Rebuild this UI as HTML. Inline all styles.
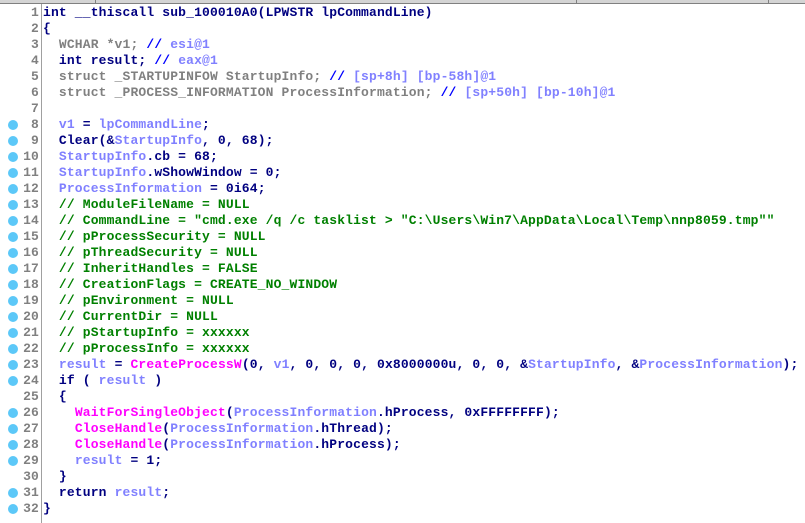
<!DOCTYPE html>
<html><head><style>
body{margin:0;width:805px;height:523px;overflow:hidden;background:#fff;position:relative;font-family:"Liberation Mono",monospace;font-size:13px;font-weight:bold;letter-spacing:0.15px}
.top{position:absolute;left:0;top:0;width:805px;height:3px;background:#d4d4d4;border-bottom:1px solid #808080}
.sep{position:absolute;top:0;width:1px;height:4px;background:#808080}
.div{position:absolute;left:41px;top:4px;width:1px;height:519px;background:#a0a0a0}
.row{position:absolute;left:0;height:16px;line-height:16px;white-space:pre}
.n{position:absolute;left:0;width:39px;text-align:right;color:#808080}
.c{position:absolute;left:43px;color:#000080}
.d{position:absolute;left:8px;top:3px;width:10px;height:10px;border-radius:50%;background:#5cc8f8}
.g{color:#808080}.b{color:#0000ff}.v{color:#8080ff}.m{color:#ff00ff}.cm{color:#008000}
</style></head><body>
<div class="top"></div><div class="sep" style="left:95px"></div><div class="sep" style="left:576px"></div><div class="sep" style="left:768px"></div>
<div class="div"></div>
<div class="row" style="top:5px"><span class="n">1</span><span class="c">int __thiscall sub_100010A0(LPWSTR lpCommandLine)</span></div>
<div class="row" style="top:21px"><span class="n">2</span><span class="c">{</span></div>
<div class="row" style="top:37px"><span class="n">3</span><span class="c"><span class="g">  WCHAR *v1; </span><span class="b">// </span><span class="v">esi@1</span></span></div>
<div class="row" style="top:53px"><span class="n">4</span><span class="c">  int result; <span class="b">// </span><span class="v">eax@1</span></span></div>
<div class="row" style="top:69px"><span class="n">5</span><span class="c"><span class="g">  struct _STARTUPINFOW StartupInfo; </span><span class="b">// </span><span class="v">[sp+8h] [bp-58h]@1</span></span></div>
<div class="row" style="top:85px"><span class="n">6</span><span class="c"><span class="g">  struct _PROCESS_INFORMATION ProcessInformation; </span><span class="b">// </span><span class="v">[sp+50h] [bp-10h]@1</span></span></div>
<div class="row" style="top:101px"><span class="n">7</span></div>
<div class="row" style="top:117px"><i class="d"></i><span class="n">8</span><span class="c">  <span class="v">v1</span> = <span class="v">lpCommandLine</span>;</span></div>
<div class="row" style="top:133px"><i class="d"></i><span class="n">9</span><span class="c">  Clear(&amp;<span class="v">StartupInfo</span>, 0, 68);</span></div>
<div class="row" style="top:149px"><i class="d"></i><span class="n">10</span><span class="c">  <span class="v">StartupInfo</span>.cb = 68;</span></div>
<div class="row" style="top:165px"><i class="d"></i><span class="n">11</span><span class="c">  <span class="v">StartupInfo</span>.wShowWindow = 0;</span></div>
<div class="row" style="top:181px"><i class="d"></i><span class="n">12</span><span class="c">  <span class="v">ProcessInformation</span> = 0i64;</span></div>
<div class="row" style="top:197px"><i class="d"></i><span class="n">13</span><span class="c cm">  // ModuleFileName = NULL</span></div>
<div class="row" style="top:213px"><i class="d"></i><span class="n">14</span><span class="c cm">  // CommandLine = "cmd.exe /q /c tasklist &gt; "C:\Users\Win7\AppData\Local\Temp\nnp8059.tmp""</span></div>
<div class="row" style="top:229px"><i class="d"></i><span class="n">15</span><span class="c cm">  // pProcessSecurity = NULL</span></div>
<div class="row" style="top:245px"><i class="d"></i><span class="n">16</span><span class="c cm">  // pThreadSecurity = NULL</span></div>
<div class="row" style="top:261px"><i class="d"></i><span class="n">17</span><span class="c cm">  // InheritHandles = FALSE</span></div>
<div class="row" style="top:277px"><i class="d"></i><span class="n">18</span><span class="c cm">  // CreationFlags = CREATE_NO_WINDOW</span></div>
<div class="row" style="top:293px"><i class="d"></i><span class="n">19</span><span class="c cm">  // pEnvironment = NULL</span></div>
<div class="row" style="top:309px"><i class="d"></i><span class="n">20</span><span class="c cm">  // CurrentDir = NULL</span></div>
<div class="row" style="top:325px"><i class="d"></i><span class="n">21</span><span class="c cm">  // pStartupInfo = xxxxxx</span></div>
<div class="row" style="top:341px"><i class="d"></i><span class="n">22</span><span class="c cm">  // pProcessInfo = xxxxxx</span></div>
<div class="row" style="top:357px"><i class="d"></i><span class="n">23</span><span class="c">  <span class="v">result</span> = <span class="m">CreateProcessW</span>(0, <span class="v">v1</span>, 0, 0, 0, 0x8000000u, 0, 0, &amp;<span class="v">StartupInfo</span>, &amp;<span class="v">ProcessInformation</span>);</span></div>
<div class="row" style="top:373px"><i class="d"></i><span class="n">24</span><span class="c">  if ( <span class="v">result</span> )</span></div>
<div class="row" style="top:389px"><span class="n">25</span><span class="c">  {</span></div>
<div class="row" style="top:405px"><i class="d"></i><span class="n">26</span><span class="c">    <span class="m">WaitForSingleObject</span>(<span class="v">ProcessInformation</span>.hProcess, 0xFFFFFFFF);</span></div>
<div class="row" style="top:421px"><i class="d"></i><span class="n">27</span><span class="c">    <span class="m">CloseHandle</span>(<span class="v">ProcessInformation</span>.hThread);</span></div>
<div class="row" style="top:437px"><i class="d"></i><span class="n">28</span><span class="c">    <span class="m">CloseHandle</span>(<span class="v">ProcessInformation</span>.hProcess);</span></div>
<div class="row" style="top:453px"><i class="d"></i><span class="n">29</span><span class="c">    <span class="v">result</span> = 1;</span></div>
<div class="row" style="top:469px"><span class="n">30</span><span class="c">  }</span></div>
<div class="row" style="top:485px"><i class="d"></i><span class="n">31</span><span class="c">  return <span class="v">result</span>;</span></div>
<div class="row" style="top:501px"><i class="d"></i><span class="n">32</span><span class="c">}</span></div>
</body></html>
